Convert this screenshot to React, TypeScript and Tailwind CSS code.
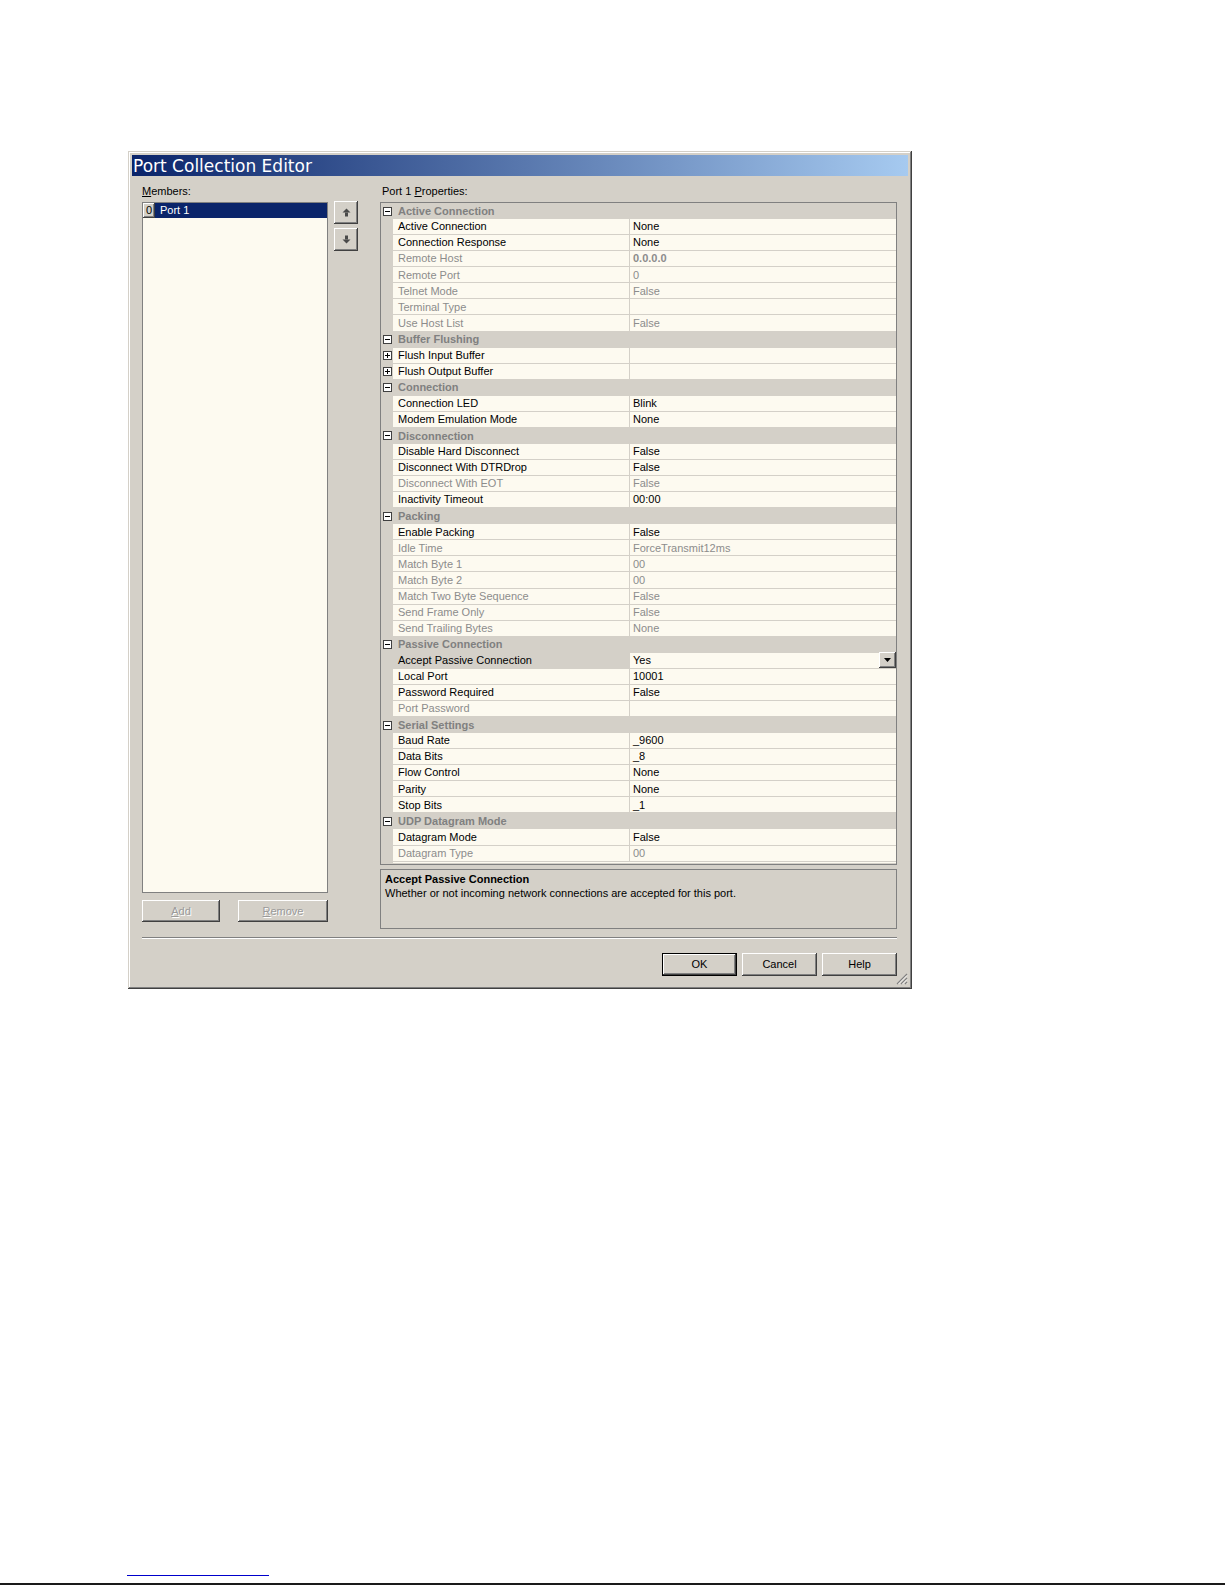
import React from "react";

type Prop = {
  name: string;
  value?: string;
  off?: boolean;
  expand?: boolean;
  strong?: boolean;
  select?: boolean;
};

type Category = { title: string; rows: Prop[] };

const categories: Category[] = [
  {
    title: "Active Connection",
    rows: [
      { name: "Active Connection", value: "None" },
      { name: "Connection Response", value: "None" },
      { name: "Remote Host", value: "0.0.0.0", off: true, strong: true },
      { name: "Remote Port", value: "0", off: true },
      { name: "Telnet Mode", value: "False", off: true },
      { name: "Terminal Type", value: "", off: true },
      { name: "Use Host List", value: "False", off: true },
    ],
  },
  {
    title: "Buffer Flushing",
    rows: [
      { name: "Flush Input Buffer", expand: true },
      { name: "Flush Output Buffer", expand: true },
    ],
  },
  {
    title: "Connection",
    rows: [
      { name: "Connection LED", value: "Blink" },
      { name: "Modem Emulation Mode", value: "None" },
    ],
  },
  {
    title: "Disconnection",
    rows: [
      { name: "Disable Hard Disconnect", value: "False" },
      { name: "Disconnect With DTRDrop", value: "False" },
      { name: "Disconnect With EOT", value: "False", off: true },
      { name: "Inactivity Timeout", value: "00:00" },
    ],
  },
  {
    title: "Packing",
    rows: [
      { name: "Enable Packing", value: "False" },
      { name: "Idle Time", value: "ForceTransmit12ms", off: true },
      { name: "Match Byte 1", value: "00", off: true },
      { name: "Match Byte 2", value: "00", off: true },
      { name: "Match Two Byte Sequence", value: "False", off: true },
      { name: "Send Frame Only", value: "False", off: true },
      { name: "Send Trailing Bytes", value: "None", off: true },
    ],
  },
  {
    title: "Passive Connection",
    rows: [
      { name: "Accept Passive Connection", value: "Yes", select: true },
      { name: "Local Port", value: "10001" },
      { name: "Password Required", value: "False" },
      { name: "Port Password", value: "", off: true },
    ],
  },
  {
    title: "Serial Settings",
    rows: [
      { name: "Baud Rate", value: "_9600" },
      { name: "Data Bits", value: "_8" },
      { name: "Flow Control", value: "None" },
      { name: "Parity", value: "None" },
      { name: "Stop Bits", value: "_1" },
    ],
  },
  {
    title: "UDP Datagram Mode",
    rows: [
      { name: "Datagram Mode", value: "False" },
      { name: "Datagram Type", value: "00", off: true },
    ],
  },
];

const raised =
  "shadow-[inset_-1px_-1px_0_#404040,inset_1px_1px_0_#ffffff,inset_-2px_-2px_0_#808080,inset_2px_2px_0_#d4d0c8]";

// small +/- box in the grid gutter
function ToggleBox({ open }: { open: boolean }) {
  return (
    <svg width="9" height="9" viewBox="0 0 9 9" className="ml-[2px]">
      <rect x="0.5" y="0.5" width="8" height="8" fill="#ffffff" stroke="#404040" />
      <rect x="2" y="4" width="5" height="1" fill="#000000" />
      {!open && <rect x="4" y="2" width="1" height="5" fill="#000000" />}
    </svg>
  );
}

function Arrow({ down }: { down?: boolean }) {
  return (
    <svg width="9" height="9" viewBox="0 0 9 9" className={down ? "rotate-180" : ""}>
      <polygon points="4.5,0.5 8.5,4.5 0.5,4.5" fill="#4a4a4a" />
      <rect x="3" y="4.5" width="3" height="4" fill="#4a4a4a" />
    </svg>
  );
}

function CategoryRow({ title }: { title: string }) {
  return (
    <div className="flex h-[16.07px] shrink-0 items-center bg-[#d4d0c8]">
      <div className="flex w-[12px] items-center">
        <ToggleBox open />
      </div>
      <span className="pl-[5px] font-bold text-[#808080]">{title}</span>
    </div>
  );
}

function PropRow({ p }: { p: Prop }) {
  const tone = p.off ? "text-[#8c8c8c]" : "text-black";
  return (
    <div className="flex h-[16.07px] shrink-0">
      <div className="flex w-[12px] items-center bg-[#d4d0c8]">
        {p.expand && <ToggleBox open={false} />}
      </div>
      <div
        className={`flex w-[237px] items-center border-r border-b border-[#d4d0c8] pl-[5px] ${tone} ${
          p.select ? "bg-[#d4d0c8]" : "bg-[#fdfaf0]"
        }`}
      >
        {p.name}
      </div>
      <div className={`flex flex-1 items-center border-b border-[#d4d0c8] bg-[#fdfaf0] pl-[3px] ${tone}`}>
        <span className={`flex-1 ${p.strong ? "font-bold" : ""}`}>{p.value}</span>
        {p.select && (
          <div className={`flex h-[16px] w-[17px] items-center justify-center bg-[#d4d0c8] ${raised}`}>
            <svg width="7" height="4" viewBox="0 0 7 4">
              <polygon points="0,0 7,0 3.5,4" fill="#000000" />
            </svg>
          </div>
        )}
      </div>
    </div>
  );
}

function PushButton({ children, dim, main, className = "" }: { children: React.ReactNode; dim?: boolean; main?: boolean; className?: string }) {
  return (
    <div
      className={`flex items-center justify-center bg-[#d4d0c8] ${
        main ? "border border-black shadow-[inset_-1px_-1px_0_#404040,inset_1px_1px_0_#ffffff,inset_-2px_-2px_0_#808080]" : raised
      } ${dim ? "text-[#9a9a9a] [text-shadow:1px_1px_0_#ffffff]" : "text-black"} ${className}`}
    >
      {children}
    </div>
  );
}

function Dialog() {
  return (
    <div className="relative flex w-[784px] flex-col bg-[#d4d0c8] p-[4px] shadow-[inset_-1px_-1px_0_#404040,inset_1px_1px_0_#d4d0c8,inset_-2px_-2px_0_#808080,inset_2px_2px_0_#ffffff]">
      {/* caption */}
      <div className="flex h-[21px] items-center bg-[linear-gradient(to_right,#0a246a,#a6caf0)] pt-[2px] pl-[1px] font-['DejaVu_Sans',sans-serif] text-[17px] text-white">
        Port Collection Editor
      </div>

      <div className="flex items-start pt-[9px] pl-[10px]">
        {/* members */}
        <div className="flex w-[186px] flex-col">
          <div className="h-[13px] leading-[13px]">
            <span className="underline">M</span>embers:
          </div>
          <div className="mt-[4px] h-[691px] border border-[#808080] bg-[#fdfaf0]">
            <div className="flex h-[15px] items-stretch">
              <div className={`flex w-[12px] items-center justify-center bg-[#d4d0c8] ${raised}`}>0</div>
              <div className="flex flex-1 items-center bg-[#0a246a] pl-[5px] text-white">Port 1</div>
            </div>
          </div>
          <div className="mt-[7px] flex gap-[18px]">
            <PushButton dim className="h-[22px] w-[78px]">
              <span>
                <span className="underline">A</span>dd
              </span>
            </PushButton>
            <PushButton dim className="h-[22px] w-[90px]">
              <span>
                <span className="underline">R</span>emove
              </span>
            </PushButton>
          </div>
        </div>

        {/* reorder buttons */}
        <div className="ml-[6px] flex flex-col gap-[4px] pt-[16px]">
          <PushButton className="h-[23px] w-[24px]">
            <Arrow />
          </PushButton>
          <PushButton className="h-[23px] w-[24px]">
            <Arrow down />
          </PushButton>
        </div>

        {/* property grid */}
        <div className="ml-[22px] flex w-[517px] flex-col">
          <div className="h-[13px] pl-[2px] leading-[13px]">
            Port 1 <span className="underline">P</span>roperties:
          </div>
          <div className="mt-[4px] flex h-[663px] flex-col border border-[#808080] bg-[#fdfaf0]">
            {categories.map((c) => (
              <React.Fragment key={c.title}>
                <CategoryRow title={c.title} />
                {c.rows.map((p) => (
                  <PropRow key={p.name} p={p} />
                ))}
              </React.Fragment>
            ))}
            <div className="flex flex-1">
              <div className="w-[12px] bg-[#d4d0c8]" />
              <div className="flex-1 border-b border-[#d4d0c8]" />
            </div>
          </div>
          <div className="mt-[4px] h-[60px] border border-[#808080] pt-[2px] pl-[4px] leading-[14px]">
            <div className="font-bold">Accept Passive Connection</div>
            <div>Whether or not incoming network connections are accepted for this port.</div>
          </div>
        </div>
      </div>

      <div className="mt-[8px] mr-[11px] ml-[10px] border-t border-b border-t-[#808080] border-b-white" />

      <div className="mt-[14px] flex justify-end gap-[5px] pr-[11px] pb-[9px]">
        <PushButton main className="h-[23px] w-[75px]">
          OK
        </PushButton>
        <PushButton className="h-[23px] w-[75px]">Cancel</PushButton>
        <PushButton className="h-[23px] w-[75px]">Help</PushButton>
      </div>

      {/* size grip */}
      <svg width="12" height="12" viewBox="0 0 12 12" className="absolute right-[4px] bottom-[4px]">
        <path d="M11 1 L1 11 M11 5 L5 11 M11 9 L9 11" stroke="#808080" strokeWidth="1.2" />
        <path d="M11 2.5 L2.5 11 M11 6.5 L6.5 11 M11 10.5 L10.5 11" stroke="#ffffff" strokeWidth="0.8" />
      </svg>
    </div>
  );
}

export default function App() {
  return (
    <div className="min-h-[1585px] w-[1225px] bg-white font-['Liberation_Sans',Arial,sans-serif] text-[11px] text-black">
      <div className="pt-[151px] pl-[128px]">
        <Dialog />
      </div>
      <div className="mt-[586px] ml-[127px] h-px w-[142px] bg-[#0000cc]" />
      <div className="mt-[7px] h-[2px] bg-[#1a1a1a]" />
    </div>
  );
}
